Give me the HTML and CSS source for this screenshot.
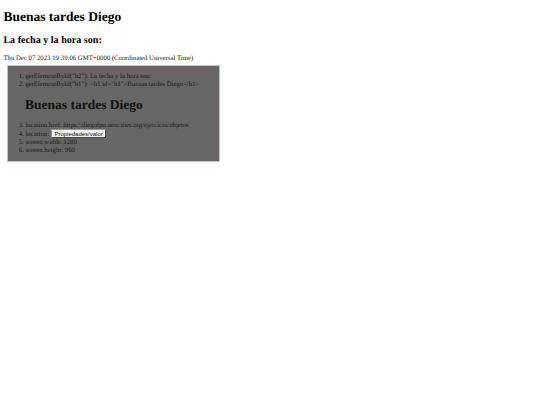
FILE: index.html
```html
<!DOCTYPE html>
<html lang="es">
<head>
  <meta charset="UTF-8">
  <title>Objetos</title>
  <link rel="stylesheet" href="styles.css">
</head>
<body>
  <h1 id="h1">Buenas tardes Diego</h1>
  <h2 id="h2">La fecha y la hora son:</h2>
  <p class="fecha">Thu Dec 07 2023 19:39:06 GMT+0000 (Coordinated Universal Time)</p>
  <div class="caja">
    <ol>
      <li>getElementById("h2"): La fecha y la hora son:</li>
      <li>getElementById("h1"): &lt;h1 id="h1"&gt;Buenas tardes Diego&lt;/h1&gt;
        <h1>Buenas tardes Diego</h1>
      </li>
      <li>location.href: https://diegofpo.neocities.org/ejercicio/objetos</li>
      <li>location: <button>Propiedades/valor</button></li>
      <li>screen.width: 1280</li>
      <li>screen.height: 960</li>
    </ol>
  </div>
</body>
</html>
```

FILE: styles.css
```css
body {
  margin: 0 3.4px;
  font-family: "Liberation Serif", serif;
  font-size: 6.75px;
  line-height: 8px;
  color: #000;
  background: #fff;
  text-rendering: geometricPrecision;
}
h1 {
  font-size: 13.5px;
  line-height: 16px;
  margin: 8.6px 0 10px;
}
h2 {
  font-size: 10.1px;
  line-height: 12px;
  margin: 8.4px 0;
}
.fecha {
  margin: 6.75px 0 0 0;
  color: #222;
}
.caja {
  margin: 2.4px 0 0 4px;
  width: 211px;
  background: #666;
  border: 1px solid #e6b4b4;
  color: #1a1a1a;
  padding: 6.5px 0 6px;
}
ol {
  margin: 0;
  padding-left: 17px;
}
ol h1 {
  color: #111;
  margin: 8.4px 0 8.6px -0.4px;
}
button {
  font-family: "Liberation Sans", sans-serif;
  font-size: 6px;
  line-height: 6px;
  margin: -1px 0;
  padding: 0.7px 2.7px;
  background: #f2f2f2;
  border: 1px outset #999;
  color: #111;
}
```
